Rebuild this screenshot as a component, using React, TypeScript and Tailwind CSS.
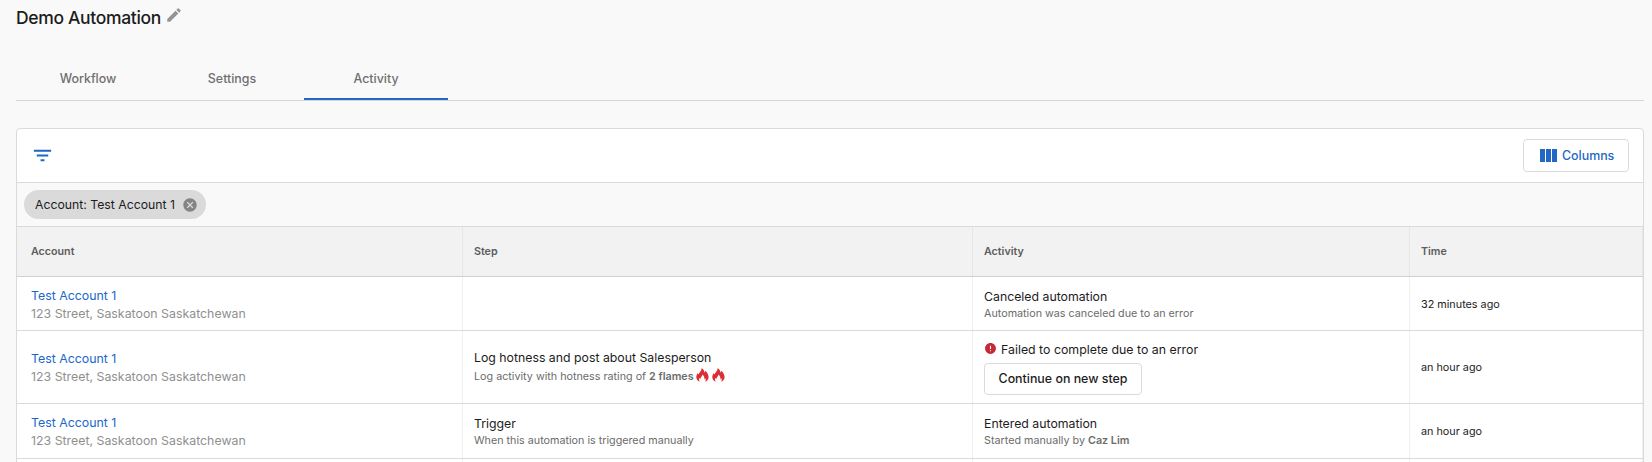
import { ReactNode } from "react";
import { MdCancel, MdEdit, MdError, MdFilterList } from "react-icons/md";

const tabs = ["Workflow", "Settings", "Activity"];
const headers = ["Account", "Step", "Activity", "Time"];

function ColumnsIcon() {
  return (
    <svg viewBox="0 0 24 24" className="size-6 fill-current">
      <path d="M10 18h5V5h-5v13zm-6 0h5V5H4v13zM16 5v13h5V5h-5z" />
    </svg>
  );
}

function Flame() {
  return (
    <svg viewBox="0 0 13 14" className="h-3.5 w-[13px] fill-[#dc2d35]">
      <path d="M5.6 0C7.6 1.1 8.3 2.6 8.3 4.6C8.9 4.1 9.2 3.5 9.3 2.8C11 4.2 12.6 6.5 12.6 9C12.6 11.3 11.3 13.1 9 13.8C9.8 12.7 10 11.5 9.5 10.3C9.3 10.8 9 11.1 8.5 11.4C8.6 9.3 7.9 7.6 6.4 6.4C6.5 8.3 4.6 9.1 4.2 10.9C3.8 10.6 3.6 10.2 3.6 9.7C2.7 11 2.9 12.6 3.9 13.8C1.6 13.1 0.3 11.3 0.3 9C0.3 7.4 0.9 6.1 1.9 4.9C2 5.6 2.3 6.1 2.8 6.5C2.9 4 6 3.2 5.6 0Z" />
    </svg>
  );
}

function Row({ height, step, activity, time }: {
  height: string;
  step?: ReactNode;
  activity: ReactNode;
  time: string;
}) {
  return (
    <div className={`grid grid-cols-[446px_510px_437px_1fr] border-b border-[#dadada] bg-white ${height}`}>
      <div className="flex flex-col justify-center border-r border-[#efefef] pt-0.5 pl-3.5 text-[12.35px] leading-[18px]">
        <a className="text-[#1a67c9]">Test Account 1</a>
        <span className="text-[#8f8f8f]">123 Street, Saskatoon Saskatchewan</span>
      </div>
      <div className="flex flex-col justify-center border-r border-[#efefef] pt-0.5 pl-[11px]">{step}</div>
      <div className="flex flex-col justify-center border-r border-[#efefef] pt-0.5 pl-[11px]">{activity}</div>
      <div className="flex items-center border-r border-[#efefef] pt-[3px] pl-[11px] text-[10.8px]">{time}</div>
    </div>
  );
}

function Detail({ title, children }: { title: string; children: ReactNode }) {
  return (
    <>
      <div className="text-[12.3px] leading-[18px]">{title}</div>
      <div className="flex h-4 items-center text-[10.75px] leading-4 text-[#6b6b6b]">{children}</div>
    </>
  );
}

export default function App() {
  return (
    <div className="h-[462px] overflow-hidden bg-[#f9f9f9] pr-2 pl-4 font-[Inter,sans-serif] text-[#1c1c1c]">
      <div className="flex h-[57px] items-start gap-1 pt-1">
        <h1 className="text-[17.5px] leading-[27px] font-[550] tracking-[-0.33px]">Demo Automation</h1>
        <MdEdit className="mt-0.5 size-[18px] text-[#949494]" />
      </div>

      <div className="flex h-11 border-b border-[#d6d6d6]">
        {tabs.map((tab) => (
          <button
            key={tab}
            className={`w-36 border-b-2 pt-1 text-[12.4px] font-[550] text-[#6f6f6f] ${
              tab === "Activity" ? "border-[#2368c4]" : "border-transparent"
            }`}
          >
            {tab}
          </button>
        ))}
      </div>

      <div className="mt-[27px] overflow-hidden rounded-t border border-[#dadada] bg-white">
        <div className="flex h-[54px] items-center justify-between border-b border-[#dadada] pr-3.5 pl-3.5">
          <MdFilterList className="size-[23px] text-[#1a67c9]" />
          <button className="flex h-[33px] w-[106px] items-center gap-0.5 rounded border border-[#dadada] pl-3 text-[12.4px] font-[550] text-[#2368c4]">
            <ColumnsIcon />
            <span className="pt-px">Columns</span>
          </button>
        </div>

        <div className="flex h-11 items-center border-b border-[#dadada] bg-[#f9f9f9] pl-[7px]">
          <div className="flex h-[29px] w-[182px] items-center justify-between rounded-full bg-[#dadada] pr-2 pl-[11px] text-[12.25px] whitespace-nowrap">
            <span className="pt-px">Account: Test Account 1</span>
            <MdCancel className="size-4 text-[#848484]" />
          </div>
        </div>

        <div className="grid h-[50px] grid-cols-[446px_510px_437px_1fr] border-b border-[#d0d0d0] bg-[#f2f2f2] text-[10.7px] font-semibold text-[#5c5c5c]">
          {headers.map((header) => (
            <div key={header} className="flex items-center border-r border-[#e6e6e6] pt-0.5 pl-[11px] first:pl-3.5">
              {header}
            </div>
          ))}
        </div>

        <Row
          height="h-[54px]"
          activity={<Detail title="Canceled automation">Automation was canceled due to an error</Detail>}
          time="32 minutes ago"
        />
        <Row
          height="h-[73px]"
          step={
            <div className="-mt-[3px] flex flex-col gap-0.5">
              <Detail title="Log hotness and post about Salesperson">
                Log activity with hotness rating of&nbsp;<b className="font-semibold">2 flames</b>
                <span className="-mt-1 ml-0.5 flex gap-[3px]">
                  <Flame />
                  <Flame />
                </span>
              </Detail>
            </div>
          }
          activity={
            <>
              <div className="-mt-px flex items-center gap-1 text-[12.35px] leading-[18px]">
                <MdError className="-mt-0.5 size-[13px] text-[#c62835]" />
                Failed to complete due to an error
              </div>
              <button className="mt-1 h-8 w-[158px] rounded border border-[#dadada] pt-px text-[12.4px] font-[550]">
                Continue on new step
              </button>
            </>
          }
          time="an hour ago"
        />
        <Row
          height="h-[55px]"
          step={<Detail title="Trigger">When this automation is triggered manually</Detail>}
          activity={
            <Detail title="Entered automation">
              Started manually by&nbsp;<b className="font-semibold">Caz Lim</b>
            </Detail>
          }
          time="an hour ago"
        />
        <div className="grid h-10 grid-cols-[446px_510px_437px_1fr]">
          {headers.map((header) => (
            <div key={header} className="border-r border-[#efefef]" />
          ))}
        </div>
      </div>
    </div>
  );
}
